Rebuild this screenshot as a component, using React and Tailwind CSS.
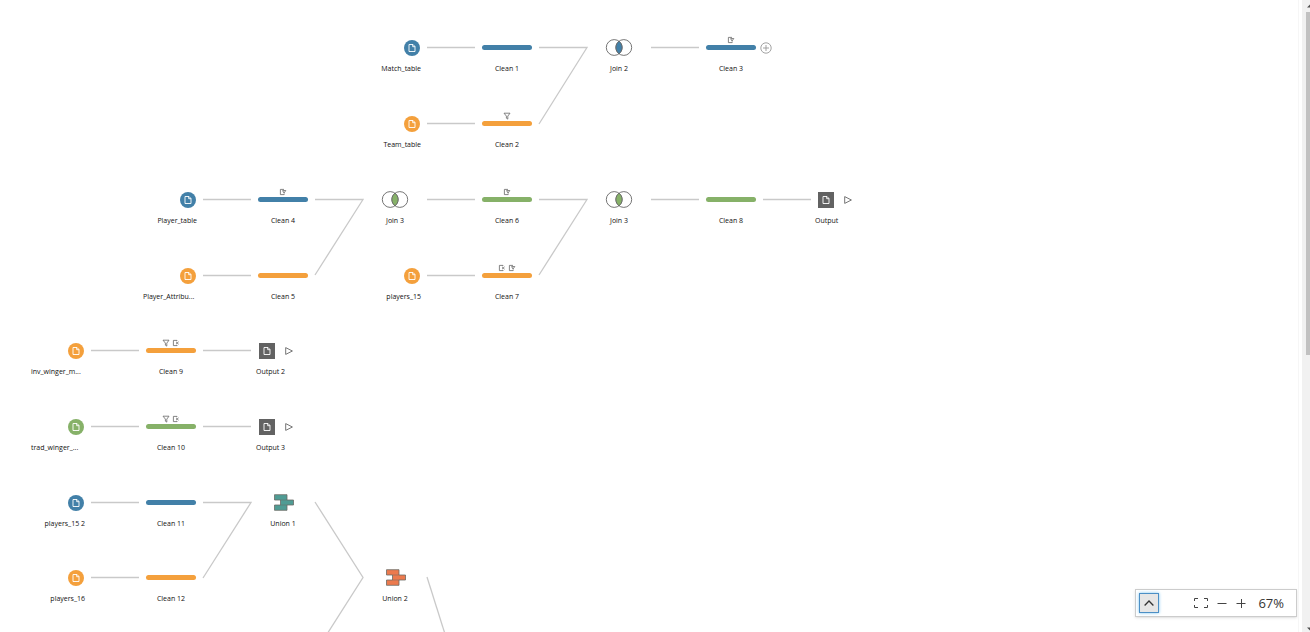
import React from "react";

const BLUE = "#4280a8";
const ORANGE = "#f4a03c";
const GREEN = "#86b168";

const sources = [
  { x: 412, y: 48, color: BLUE, label: "Match_table" },
  { x: 412, y: 124, color: ORANGE, label: "Team_table" },
  { x: 188, y: 200, color: BLUE, label: "Player_table" },
  { x: 188, y: 276, color: ORANGE, label: "Player_Attribu...", cut: true },
  { x: 412, y: 276, color: ORANGE, label: "players_15" },
  { x: 76, y: 351, color: ORANGE, label: "inv_winger_m...", cut: true },
  { x: 76, y: 427, color: GREEN, label: "trad_winger_...", cut: true },
  { x: 76, y: 503, color: BLUE, label: "players_15 2" },
  { x: 76, y: 578, color: ORANGE, label: "players_16" },
];

const cleans = [
  { x: 507, y: 48, color: BLUE, label: "Clean 1", marks: [] },
  { x: 507, y: 124, color: ORANGE, label: "Clean 2", marks: ["filter"] },
  { x: 731, y: 48, color: BLUE, label: "Clean 3", marks: ["edit"] },
  { x: 283, y: 200, color: BLUE, label: "Clean 4", marks: ["edit"] },
  { x: 283, y: 276, color: ORANGE, label: "Clean 5", marks: [] },
  { x: 507, y: 200, color: GREEN, label: "Clean 6", marks: ["edit"] },
  { x: 507, y: 276, color: ORANGE, label: "Clean 7", marks: ["remove", "edit"] },
  { x: 731, y: 200, color: GREEN, label: "Clean 8", marks: [] },
  { x: 171, y: 351, color: ORANGE, label: "Clean 9", marks: ["filter", "remove"] },
  { x: 171, y: 427, color: GREEN, label: "Clean 10", marks: ["filter", "remove"] },
  { x: 171, y: 503, color: BLUE, label: "Clean 11", marks: [] },
  { x: 171, y: 578, color: ORANGE, label: "Clean 12", marks: [] },
];

const joins = [
  { x: 619, y: 48, color: BLUE, label: "Join 2" },
  { x: 395, y: 200, color: GREEN, label: "Join 3" },
  { x: 619, y: 200, color: GREEN, label: "Join 3" },
];

const unions = [
  { x: 283, y: 503, color: "#4f9c94", label: "Union 1" },
  { x: 395, y: 578, color: "#ec7a4e", label: "Union 2" },
];

const outputs = [
  { x: 826, y: 200, label: "Output" },
  { x: 267, y: 351, label: "Output 2" },
  { x: 267, y: 427, label: "Output 3" },
];

const edges = [
  "M427 47.5H475", "M539 47.5H587L539 124", "M651 47.5H699", "M427 123.5H475",
  "M203 199.5H251", "M315 199.5H363L315 275", "M427 199.5H475", "M539 199.5H587L539 275",
  "M651 199.5H699", "M763 199.5H811", "M203 275.5H251", "M427 275.5H475",
  "M91 350.5H139", "M203 350.5H251", "M91 426.5H139", "M203 426.5H251",
  "M91 502.5H139", "M203 502.5H251L203 578", "M91 577.5H139",
  "M315 502L363 577.5L315 653", "M427 577L475 729",
];

function FileGlyph() {
  return (
    <svg className="size-2" viewBox="0 0 8 8" fill="none" stroke="currentColor" strokeWidth="0.9" aria-hidden="true">
      <path d="M1 .5h4l2 2v5H1z" />
      <path d="M4.7.6v2.1H7" />
    </svg>
  );
}

function Mark({ kind }) {
  return (
    <svg className="size-2" viewBox="0 0 8 8" fill="none" stroke="#666" strokeWidth="0.8" aria-hidden="true">
      {kind === "filter" && <path d="M1 1.2h6L4.8 4.1v3L3.4 6.2V4.1z" />}
      {kind === "edit" && <path d="M5 1.4H1.4v5.2h3.8V5.4M3.6 2.6L6.8 2.5L5 5z" />}
      {kind === "remove" && <path d="M5 2V1.4H1.4v5.2h3.7V6M4 2.8l2.6 2.4M6.6 2.8L4 5.2" />}
    </svg>
  );
}

function Node({ x, y, width, align, label, cut, children }) {
  return (
    <div
      className={`absolute flex -translate-x-1/2 flex-col ${align}`}
      style={{ left: x, top: y - 13, width }}
    >
      {children}
      <span className={`mt-1 whitespace-nowrap text-[7px] leading-2 text-[#111] ${cut ? "w-[54px]" : ""}`}>{label}</span>
    </div>
  );
}

function Source({ node }) {
  return (
    <Node x={node.x} y={node.y} width={18} align="items-end" label={node.label} cut={node.cut}>
      <div className="flex h-[26px] items-center pr-px">
        <div className="flex size-4 items-center justify-center rounded-full text-white" style={{ backgroundColor: node.color }}>
          <FileGlyph />
        </div>
      </div>
    </Node>
  );
}

function Clean({ node }) {
  return (
    <Node x={node.x} y={node.y} width={50} align="items-center" label={node.label}>
      <div className="flex h-[26px] w-full flex-col pt-px">
        <div className="flex h-2 justify-center gap-0.5">
          {node.marks.map((kind) => <Mark key={kind} kind={kind} />)}
        </div>
        <div className="mt-px h-[5px] rounded-full" style={{ backgroundColor: node.color }} />
      </div>
    </Node>
  );
}

function Join({ node }) {
  return (
    <Node x={node.x} y={node.y} width={50} align="items-center" label={node.label}>
      <svg className="h-[26px] w-7" viewBox="0 0 28 26" fill="none" stroke="#666" strokeWidth="0.9" aria-hidden="true">
        <circle cx="9.2" cy="12.5" r="7.9" />
        <circle cx="18.8" cy="12.5" r="7.9" />
        <path d="M14 6.2a7.9 7.9 0 0 1 0 12.6a7.9 7.9 0 0 1 0-12.6z" fill={node.color} />
      </svg>
    </Node>
  );
}

function Union({ node }) {
  return (
    <Node x={node.x} y={node.y} width={50} align="items-center" label={node.label}>
      <svg className="h-[26px] w-6" viewBox="0 0 24 26" fill={node.color} aria-hidden="true">
        <path
          d="M3.5 4.7h12.5v5.3h6.5v5h-6.5v5.3h-12.5v-5.3h6v-5h-6z"
          stroke="#6b6b66"
          strokeWidth="0.8"
        />
        <path d="M9.5 10H16M9.5 15H16" stroke="#6b6b66" strokeWidth="0.5" />
      </svg>
    </Node>
  );
}

function Output({ node }) {
  return (
    <Node x={node.x} y={node.y} width={22} align="items-start" label={node.label}>
      <div className="flex h-[26px] items-center gap-2.5 pl-[3px]">
        <div className="flex size-4 shrink-0 items-center justify-center bg-[#626262] text-white">
          <FileGlyph />
        </div>
        <button type="button" aria-label={`Run ${node.label}`} className="size-2 shrink-0">
          <svg className="size-2" viewBox="0 0 8 8" fill="none" stroke="#666" strokeWidth="0.9" aria-hidden="true">
            <path d="M.7.6v6.8L7.4 4z" />
          </svg>
        </button>
      </div>
    </Node>
  );
}

function Toolbar() {
  return (
    <div className="absolute right-px bottom-[15px] flex h-7 items-center border border-[#ccc] bg-white pr-3 pl-[3px] text-[#444] shadow-sm">
      <button type="button" aria-label="Show navigation map" className="flex size-5 items-center justify-center border border-[#4c8fc5] bg-[#e6e6e6] shadow-[0_0_3px_#7cc4f0]">
        <svg className="h-2 w-2.5" viewBox="0 0 10 8" fill="none" stroke="#333" strokeWidth="1.3" aria-hidden="true">
          <path d="M.6 6.5L5 2l4.4 4.5" />
        </svg>
      </button>
      <button type="button" aria-label="Fit to screen" className="ml-[34px] flex w-4 justify-center">
        <svg className="h-3 w-4" viewBox="0 0 16 12" fill="none" stroke="currentColor" aria-hidden="true">
          <path d="M1.5 4V1.5H5M11 1.5h3.5V4M14.5 8v2.5H11M5 10.5H1.5V8" />
        </svg>
      </button>
      <button type="button" aria-label="Zoom out" className="ml-[7px] flex size-3 items-center justify-center">
        <svg className="size-2.5" viewBox="0 0 10 10" stroke="currentColor" aria-hidden="true"><path d="M.5 5.5h9" /></svg>
      </button>
      <button type="button" aria-label="Zoom in" className="ml-[7px] flex size-3 items-center justify-center">
        <svg className="size-2.5" viewBox="0 0 10 10" stroke="currentColor" aria-hidden="true"><path d="M.5 5.5h9M5.5 1v9" /></svg>
      </button>
      <span className="ml-[11px] text-[13px] leading-4 text-[#333]">67%</span>
    </div>
  );
}

export default function App() {
  return (
    <div className="flex h-screen overflow-hidden bg-white font-['Open_Sans',sans-serif]">
      <main className="relative flex-1 overflow-hidden border-r border-[#f6f6f6]">
        <svg className="absolute inset-0 size-full" fill="none" stroke="#c9c9c9" strokeWidth="1.3" aria-hidden="true">
          {edges.map((d) => <path key={d} d={d} />)}
        </svg>
        {sources.map((node) => <Source key={node.label} node={node} />)}
        {cleans.map((node) => <Clean key={node.label} node={node} />)}
        {joins.map((node) => <Join key={`${node.x}-${node.y}`} node={node} />)}
        {unions.map((node) => <Union key={node.label} node={node} />)}
        {outputs.map((node) => <Output key={node.label} node={node} />)}
        <button type="button" aria-label="Add step" className="absolute top-[42px] left-[760px] size-3">
          <svg className="size-3" viewBox="0 0 12 12" fill="none" stroke="#999" strokeWidth="0.9" aria-hidden="true">
            <circle cx="6" cy="6" r="5.2" />
            <path d="M3 6h6M6 3v6" />
          </svg>
        </button>
        <Toolbar />
      </main>
      <div className="ml-[3px] flex w-2 flex-col items-end justify-between bg-[#f1f1f1]" aria-hidden="true">
        <svg className="mt-1 h-1 w-1" viewBox="0 0 4 4" fill="#505050"><path d="M1 3.5L4 .5v3z" /></svg>
        <div className="mt-1 mb-auto h-[54.3%] w-1 bg-[#c1c1c1]" />
        <svg className="mb-px h-1 w-1" viewBox="0 0 4 4" fill="#505050"><path d="M1 .5L4 3.5v-3z" /></svg>
      </div>
    </div>
  );
}
